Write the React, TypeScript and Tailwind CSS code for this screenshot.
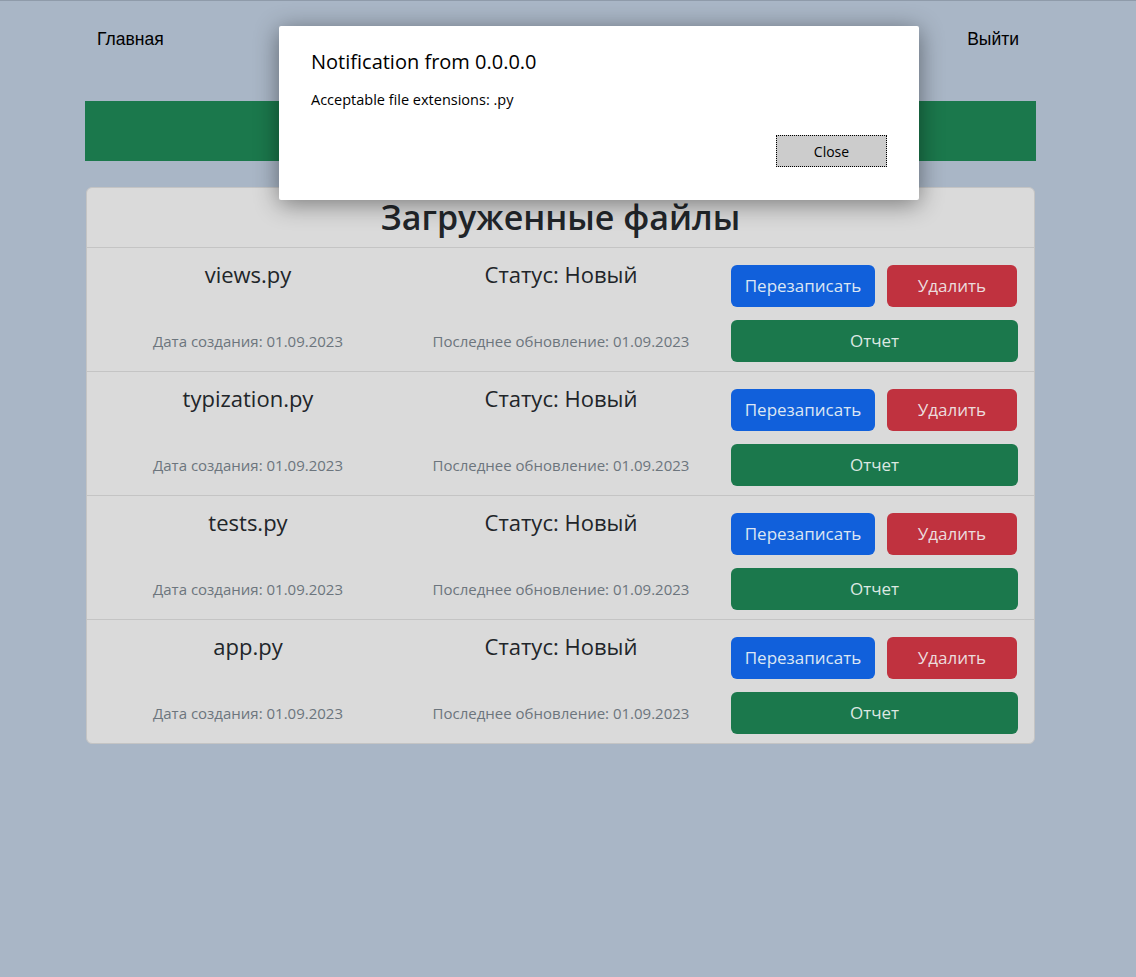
import React from "react";

const files = ["views.py", "typization.py", "tests.py", "app.py"];

function FileRow({ name, last }: { name: string; last: boolean }) {
  return (
    <div className={`pt-[11px] pb-[9px] ${last ? "" : "border-b border-[#c4c4c4]"}`}>
      <div className="grid grid-cols-[322px_304px_305px] gap-y-[13px]">
        <div className="h-[48px] text-center text-[22px] leading-[30px] text-[#212529]">{name}</div>
        <div className="h-[48px] text-center text-[22px] leading-[30px] text-[#212529]">Статус: Новый</div>
        <div className="h-[48px] pt-[6px] pl-[18px] flex gap-[12px]">
          <button className="w-[144px] h-[42px] rounded-[6px] bg-[#1160db] text-[#dce6f3] text-[17px]">Перезаписать</button>
          <button className="w-[130px] h-[42px] rounded-[6px] bg-[#c0323f] text-[#ecdcdd] text-[17px]">Удалить</button>
        </div>
        <div className="h-[42px] flex items-center justify-center text-[15px] text-[#6c757d]">Дата создания: 01.09.2023</div>
        <div className="h-[42px] flex items-center justify-center text-[15px] text-[#6c757d]">Последнее обновление: 01.09.2023</div>
        <div className="pl-[18px]">
          <button className="w-[287px] h-[42px] rounded-[6px] bg-[#1b784c] text-[#dde8e2] text-[17px]">Отчет</button>
        </div>
      </div>
    </div>
  );
}

export default function App() {
  return (
    <div className="relative min-h-[977px] bg-[#a9b6c6] border-t border-[#8f9baa]" style={{ fontFamily: '"Open Sans", sans-serif' }}>
      <div className="w-[951px] ml-[85px]">
        <nav className="flex justify-between items-center h-[76px] pl-[12px] pr-[17px] text-[17.5px] text-black" style={{ fontFamily: '"Liberation Sans", Arial, sans-serif' }}>
          <span>Главная</span>
          <span>Выйти</span>
        </nav>
        <div className="mt-[24px] h-[60px] bg-[#1b784c]"></div>
        <div className="mt-[26px] ml-[1px] w-[949px] bg-[#dadada] border border-[#c4c4c4] rounded-[6px] overflow-hidden">
          <div className="h-[60px] flex items-center justify-center border-b border-[#c4c4c4] text-[34px] font-semibold text-[#212529]">
            Загруженные файлы
          </div>
          {files.map((f, i) => (
            <FileRow key={f} name={f} last={i === files.length - 1} />
          ))}
        </div>
      </div>

      <div className="absolute left-[279px] top-[25px] w-[640px] h-[174px] bg-white rounded-[2px] shadow-[0_4px_24px_rgba(0,0,0,0.45)] px-[32px] pt-[24px]" style={{ fontFamily: '"Open Sans", sans-serif' }}>
        <div className="text-[20px] leading-[24px] text-black">Notification from 0.0.0.0</div>
        <div className="mt-[17px] text-[14.5px] leading-[18px] text-black">Acceptable file extensions: .py</div>
        <div className="flex justify-end mt-[26px]">
          <button className="w-[111px] h-[32px] bg-[#cccccc] border border-dotted border-black text-[14px] text-black">Close</button>
        </div>
      </div>
    </div>
  );
}
